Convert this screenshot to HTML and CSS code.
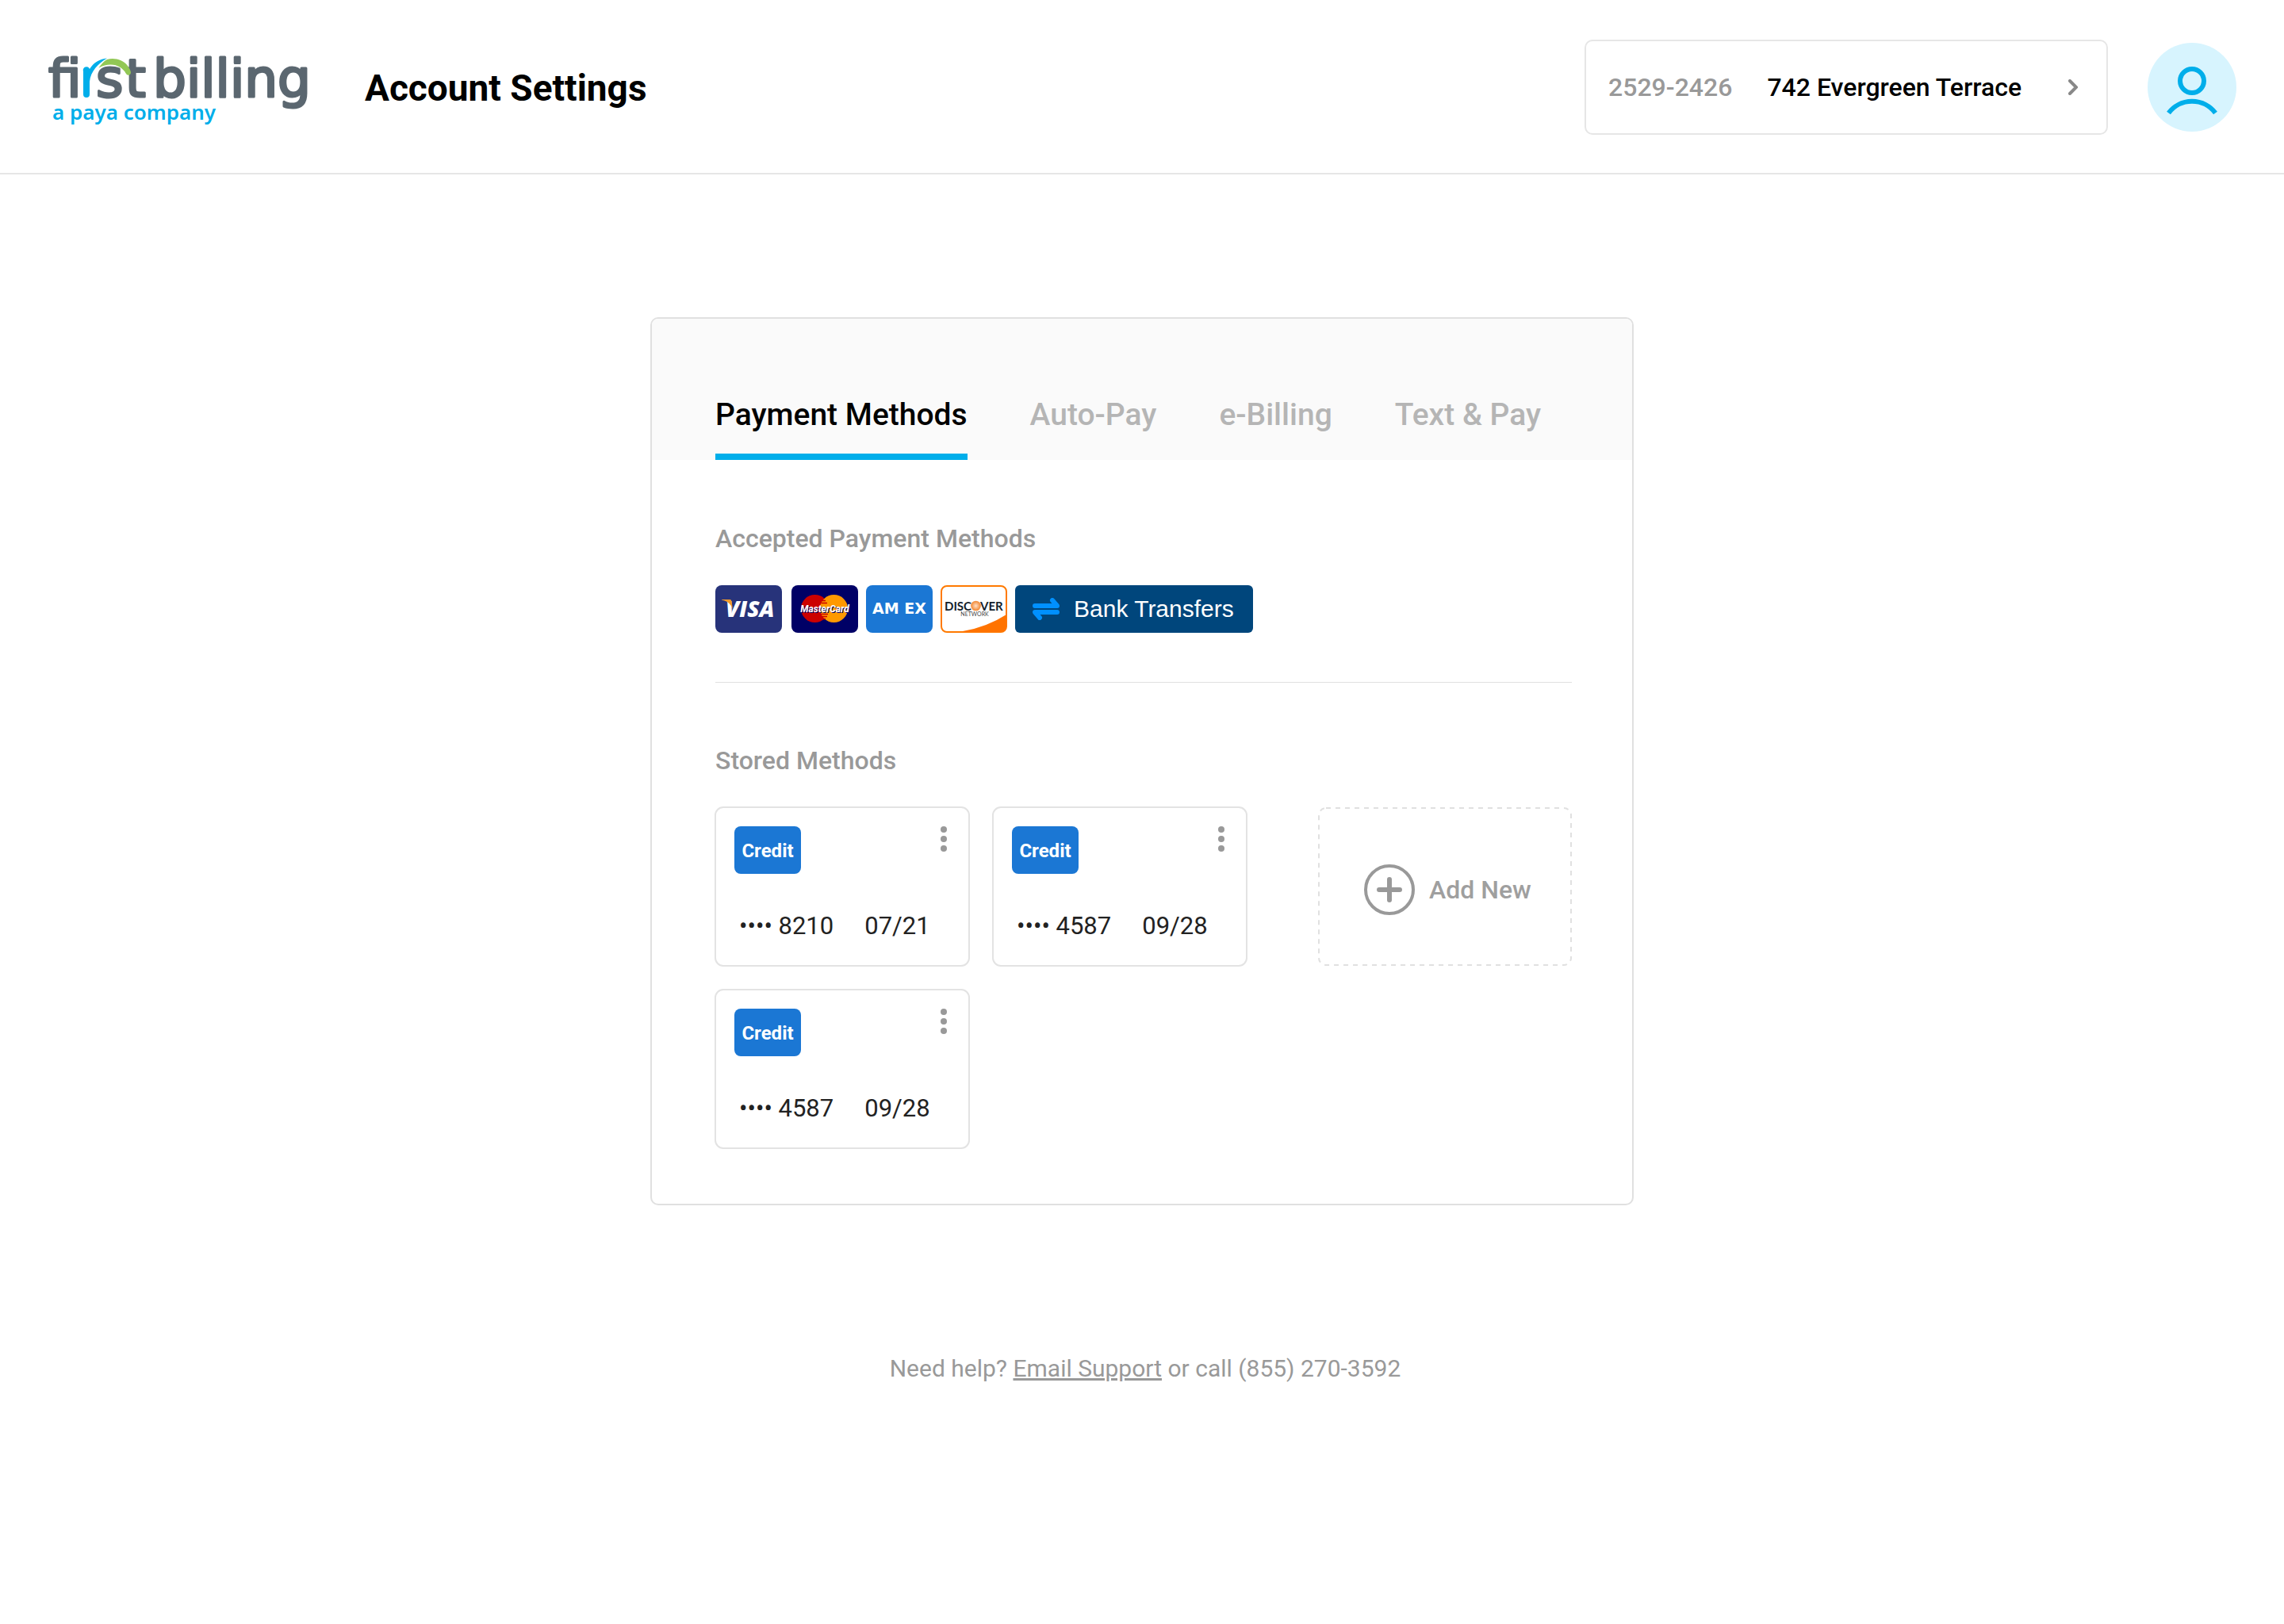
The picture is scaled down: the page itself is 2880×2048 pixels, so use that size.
FILE: index.html
```html
<!DOCTYPE html>
<html lang="en">
<head>
<meta charset="utf-8">
<meta name="viewport" content="width=device-width, initial-scale=1">
<title>Account Settings</title>
<link rel="stylesheet" href="styles.css">
</head>
<body>
<header class="topbar">
  <svg class="logo" viewBox="0 0 380 120" role="img" aria-label="firstbilling, a paya company">
    <text class="logo-word"><tspan x="21" y="72">fi</tspan><tspan x="81" y="72">s</tspan><tspan x="118" y="72">t</tspan><tspan x="153" y="72">billing</tspan><tspan class="logo-tag" x="26" y="101">a paya company</tspan></text>
    <path fill="#00aeea" d="M65 40a4 4 0 0 1 8-3C78 29 86 24 95 23.500C84 30 74 40 73 53V69a4 4 0 0 1-8 0Z"/>
    <path fill="#92c755" d="M84.300 35.700C88 31 91 27 95 25C104 22.500 115 25 121 33C123 36 125 39 125 42A3.200 3.200 0 0 1 119 43C114 33 100 27 84.300 35.700Z"/>
  </svg>
  <h1 class="title">Account Settings</h1>
  <button class="account" type="button">
    <span class="account-number">2529-2426</span>
    <span>742 Evergreen Terrace</span>
    <svg class="chevron" viewBox="0 0 12 20" aria-hidden="true"><path d="M2 2L10 10L2 18"/></svg>
  </button>
  <button class="avatar" type="button" aria-label="Profile">
    <svg viewBox="0 0 112 112" aria-hidden="true"><circle cx="56" cy="48" r="15"/><path d="M26.500 88.500A37 37 0 0 1 85.500 88.500"/></svg>
  </button>
</header>

<main class="card">
  <nav class="tabs">
    <button class="tab tab-active" type="button">Payment Methods</button>
    <button class="tab" type="button">Auto-Pay</button>
    <button class="tab" type="button">e-Billing</button>
    <button class="tab" type="button">Text &amp; Pay</button>
  </nav>
  <div class="card-body">
    <section class="accepted">
      <h2 class="label">Accepted Payment Methods</h2>
      <div class="brands">
        <svg class="brand brand-visa" viewBox="0 0 84 60" role="img" aria-label="Visa">
          <rect width="84" height="60" rx="8" fill="#27337a"/>
          <text class="visa-text" x="13" y="40">VISA</text>
          <path fill="#f09a2c" d="M8 18H18.500Q20 18 20.400 20L22 30Q18 20 8 18.500Z"/>
        </svg>
        <svg class="brand" viewBox="0 0 84 60" role="img" aria-label="MasterCard">
          <rect width="84" height="60" rx="8" fill="#000066"/>
          <circle cx="29.500" cy="29.500" r="17.500" fill="#cc0000"/>
          <circle cx="53.500" cy="29.500" r="17.500" fill="#ff9900"/>
          <path stroke="#cc0000" stroke-width="1.500" d="M39 19.500H43M37.500 22.500H45M37 36.500H46M37 39.500H45M39 42.500H43"/>
          <text class="mc-text" x="42" y="34" text-anchor="middle">MasterCard</text>
        </svg>
        <svg class="brand" viewBox="0 0 84 60" role="img" aria-label="American Express">
          <rect width="84" height="60" rx="8" fill="#1b77d4"/>
          <text class="amex-text" x="42" y="36" text-anchor="middle">AM EX</text>
        </svg>
        <svg class="brand" viewBox="0 0 84 60" role="img" aria-label="Discover">
          <defs>
            <radialGradient id="orb"><stop offset="0" stop-color="#fde0c8"/><stop offset="1" stop-color="#f3862f"/></radialGradient>
          </defs>
          <rect x="1" y="1" width="82" height="58" rx="7" fill="#fff" stroke="#ff7a00" stroke-width="2"/>
          <path fill="#ff7300" d="M28 58Q58 53 83 37V52Q83 59 76 59H28Z"/>
          <text class="disc-text" x="39" y="32" text-anchor="end">DISC</text>
          <circle cx="44.500" cy="26" r="6.300" fill="url(#orb)"/>
          <text class="disc-text" x="50" y="32">VER</text>
          <text class="net-text" x="43" y="39" text-anchor="middle">NETWORK</text>
        </svg>
        <div class="bank">
          <svg class="bank-icon" viewBox="0 0 34 28" aria-hidden="true"><path d="M3 10H31L25 3M31 18H3L9 25"/></svg>
          <span>Bank Transfers</span>
        </div>
      </div>
    </section>
    <section class="stored">
      <h2 class="label">Stored Methods</h2>
      <div class="stored-row">
        <ul class="methods">
          <li class="method">
            <div class="method-top">
              <span class="badge">Credit</span>
              <button class="more" type="button" aria-label="More options"><svg viewBox="0 0 8 32" aria-hidden="true"><circle cx="4" cy="4" r="4"/><circle cx="4" cy="16" r="4"/><circle cx="4" cy="28" r="4"/></svg></button>
            </div>
            <div class="method-info"><span>•••• 8210</span><span>07/21</span></div>
          </li>
          <li class="method">
            <div class="method-top">
              <span class="badge">Credit</span>
              <button class="more" type="button" aria-label="More options"><svg viewBox="0 0 8 32" aria-hidden="true"><circle cx="4" cy="4" r="4"/><circle cx="4" cy="16" r="4"/><circle cx="4" cy="28" r="4"/></svg></button>
            </div>
            <div class="method-info"><span>•••• 4587</span><span>09/28</span></div>
          </li>
          <li class="method">
            <div class="method-top">
              <span class="badge">Credit</span>
              <button class="more" type="button" aria-label="More options"><svg viewBox="0 0 8 32" aria-hidden="true"><circle cx="4" cy="4" r="4"/><circle cx="4" cy="16" r="4"/><circle cx="4" cy="28" r="4"/></svg></button>
            </div>
            <div class="method-info"><span>•••• 4587</span><span>09/28</span></div>
          </li>
        </ul>
        <button class="add" type="button">
          <svg class="dash" aria-hidden="true"><rect x="1" y="1" width="318" height="198" rx="9"/></svg>
          <svg class="plus" viewBox="0 0 64 64" aria-hidden="true"><circle cx="32" cy="32" r="30" stroke-width="4"/><path d="M32 19V45M19 32H45" stroke-width="6" stroke-linecap="round"/></svg>
          <span>Add New</span>
        </button>
      </div>
    </section>
  </div>
</main>

<footer class="help">Need help? <a href="#support">Email Support</a> or call (855) 270-3592</footer>
</body>
</html>
```
FILE: styles.css
```css
* {
  box-sizing: border-box;
}

body {
  margin: 0;
  background: #fff;
  color: #000;
  font-family: Roboto, "Liberation Sans", sans-serif;
  font-size: 32px;
  line-height: 40px;
}

button {
  margin: 0;
  padding: 0;
  border: 0;
  background: none;
  color: inherit;
  font: inherit;
  cursor: pointer;
}

h1,
h2,
ul {
  margin: 0;
  padding: 0;
}

svg {
  display: block;
  flex: none;
}

.topbar {
  display: flex;
  align-items: center;
  padding: 50px 60px 48px 40px;
  border-bottom: 2px solid #e6e6e6;
}

.logo {
  width: 380px;
  height: 120px;
}

.logo-word {
  fill: #5b6770;
  stroke: #5b6770;
  stroke-width: 3px;
  stroke-linejoin: round;
  font-family: "DejaVu Sans", sans-serif;
  font-size: 66px;
}

.logo-tag {
  fill: #00aeea;
  stroke: none;
  font-family: "Noto Sans", sans-serif;
  font-size: 26px;
  font-weight: 600;
}

.title {
  margin-left: 40px;
  padding-top: 2px;
  font-size: 46px;
  font-weight: 700;
  line-height: 56px;
}

.account {
  display: flex;
  align-items: center;
  gap: 44px;
  width: 660px;
  height: 120px;
  margin-left: auto;
  padding: 0 36px 0 28px;
  border: 2px solid #e6e6e6;
  border-radius: 10px;
  font-weight: 500;
}

.account-number {
  color: #999;
}

.chevron {
  width: 12px;
  height: 20px;
  margin-left: auto;
  fill: none;
  stroke: #888;
  stroke-width: 4px;
  stroke-linecap: round;
}

.avatar {
  width: 112px;
  height: 112px;
  margin-left: 50px;
  border-radius: 50%;
  background: #d7f4fe;
}

.avatar svg {
  fill: none;
  stroke: #00aeea;
  stroke-width: 6px;
}

.card {
  max-width: 1240px;
  margin: 180px auto 0;
  border: 2px solid #e0e0e0;
  border-radius: 10px;
  overflow: hidden;
}

.tabs {
  display: flex;
  gap: 79px;
  padding: 97px 80px 0;
  background: #fafafa;
}

.tab {
  padding-bottom: 25px;
  border-bottom: 8px solid transparent;
  color: #b5b5b5;
  font-size: 39px;
  font-weight: 500;
  line-height: 48px;
}

.tab-active {
  border-color: #00aeea;
  color: #000;
}

.card-body {
  padding: 79px 76px 70px 80px;
}

.label {
  margin-bottom: 39px;
  color: #999;
  font-size: 32px;
  font-weight: 500;
}

.accepted {
  padding-bottom: 62px;
  border-bottom: 1px solid #e0e0e0;
}

.stored {
  padding-top: 78px;
}

.brands {
  display: flex;
  gap: 10px;
}

.brand {
  width: 84px;
  height: 60px;
}

.brand-visa {
  margin-right: 2px;
}

.visa-text {
  fill: #fff;
  font: italic 800 28px "Open Sans", sans-serif;
}

.mc-text {
  fill: #fff;
  font: italic 700 12px Roboto, sans-serif;
  text-shadow: 1px 1px 0 #000066;
}

.amex-text {
  fill: #fff;
  font: 700 19px "DejaVu Sans", sans-serif;
}

.disc-text {
  fill: #14212b;
  font: 700 15px Lato, sans-serif;
}

.net-text {
  fill: #444;
  font: 400 7px Lato, sans-serif;
}

.bank {
  display: flex;
  align-items: center;
  gap: 18px;
  width: 300px;
  height: 60px;
  padding-left: 22px;
  border-radius: 6px;
  background: #00467c;
  color: #fff;
  font-family: "Liberation Sans", sans-serif;
  font-size: 30px;
  white-space: nowrap;
}

.bank-icon {
  width: 34px;
  height: 28px;
  fill: none;
  stroke: #0090ff;
  stroke-width: 6px;
  stroke-linecap: round;
  stroke-linejoin: round;
}

.stored-row {
  display: flex;
  align-items: flex-start;
  justify-content: space-between;
}

.methods {
  display: grid;
  grid-template-columns: 320px 320px;
  gap: 30px;
  list-style: none;
}

.method {
  height: 200px;
  padding: 24px 28px 0 24px;
  border-radius: 10px;
  outline: 2px solid #e3e3e3;
  outline-offset: -1px;
}

.method-top {
  display: flex;
  align-items: flex-start;
  justify-content: space-between;
}

.badge {
  width: 84px;
  padding-top: 2px;
  border-radius: 8px;
  background: #1b77d4;
  color: #fff;
  font-size: 24px;
  font-weight: 700;
  line-height: 58px;
  text-align: center;
}

.more svg {
  width: 8px;
  height: 32px;
  fill: #999;
}

.method-info {
  display: flex;
  gap: 39px;
  margin-top: 46px;
  padding-left: 6px;
  color: #222;
  font-size: 31px;
  white-space: nowrap;
}

.add {
  position: relative;
  display: flex;
  align-items: center;
  gap: 18px;
  width: 320px;
  height: 200px;
  padding: 8px 0 0 58px;
  color: #9f9f9f;
  font-weight: 500;
}

.dash {
  position: absolute;
  inset: 0;
  width: 100%;
  height: 100%;
  fill: none;
  stroke: #e0e0e0;
  stroke-width: 2px;
  stroke-dasharray: 6 6;
}

.plus {
  width: 64px;
  height: 64px;
  fill: none;
  stroke: #999;
}

.help {
  margin: 186px 0 80px;
  padding-left: 8px;
  color: #999;
  font-size: 30px;
  text-align: center;
}

.help a {
  color: inherit;
}
```
